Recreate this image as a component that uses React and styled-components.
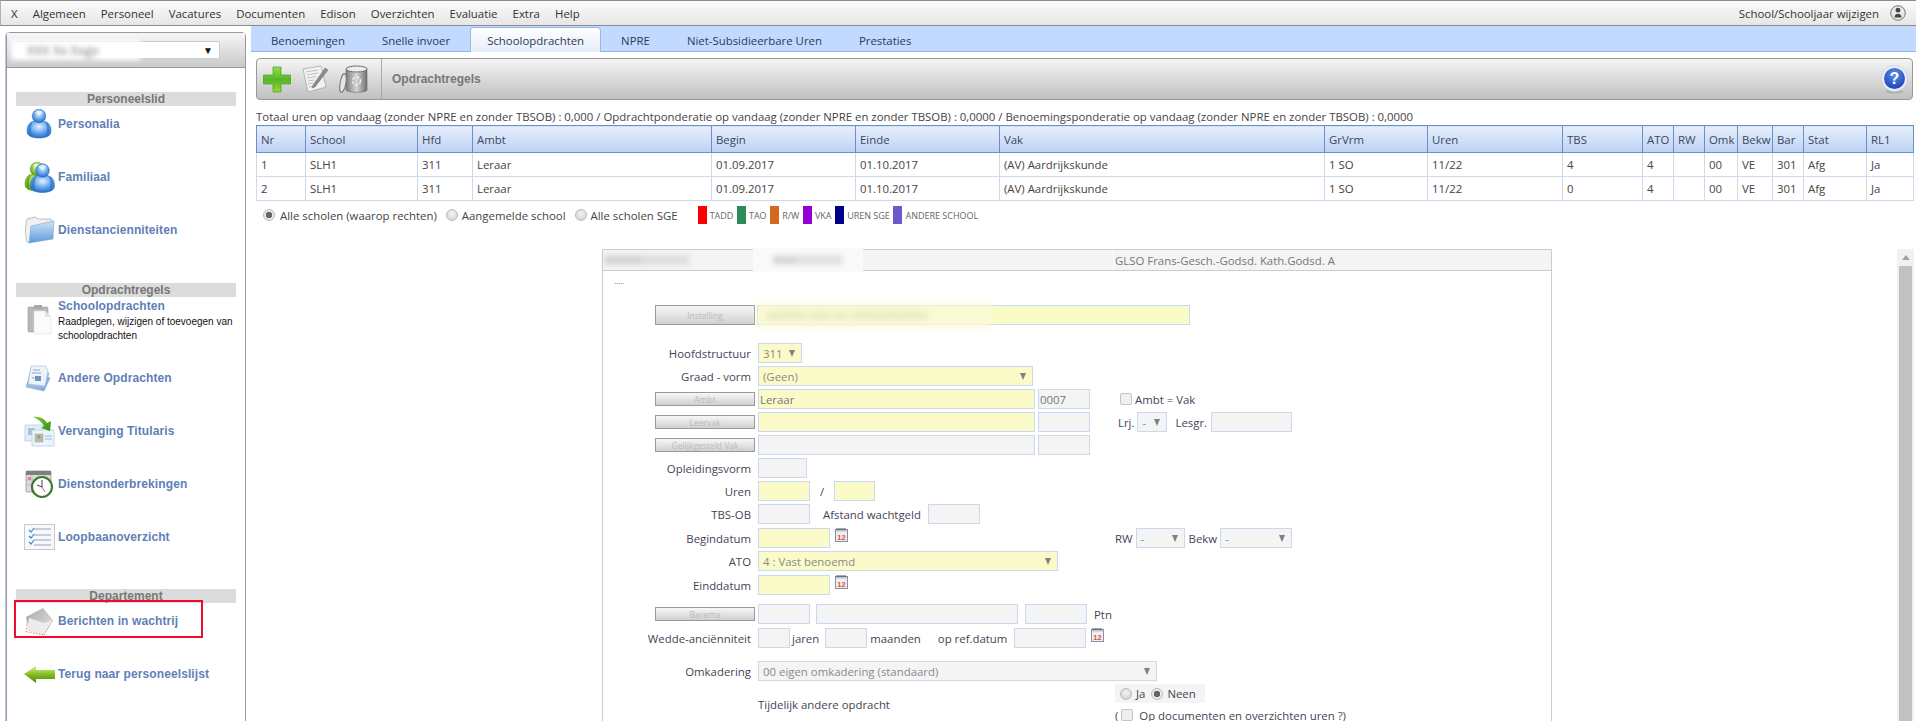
import React from "react";
import styled, { createGlobalStyle } from "styled-components";

const Global = createGlobalStyle`
  html, body { margin: 0; padding: 0; background: #fff; }
  body { font-family: "Open Sans", "Liberation Sans", sans-serif; font-size: 11.4px; color: #444; }
  * { box-sizing: border-box; }
`;

const Page = styled.div`
  width: 1916px;
  height: 721px;
  overflow: hidden;
  display: flex;
  flex-direction: column;
`;

const TopBar = styled.header`
  height: 26px;
  flex: none;
  display: flex;
  align-items: center;
  padding: 0 10px;
  border-top: 1px solid #8c8c8c;
  border-bottom: 1px solid #8c8c8c;
  border-left: 1px solid #b0b0b0;
  background: linear-gradient(#fbfbfb, #e6e6e6);
  color: #333;
`;
const MenuItem = styled.span`
  margin-right: 15.1px;
`;
const TopRight = styled.div`
  margin-left: auto;
  display: flex;
  align-items: center;
  gap: 11px;
`;

const Shell = styled.div`
  flex: 1;
  display: flex;
  min-height: 0;
`;

const Sidebar = styled.aside`
  width: 251px;
  flex: none;
  padding: 6px 5px 0 6px;
`;
const SidePanel = styled.div`
  height: 720px;
  border: 1px solid #999;
  border-radius: 4px 4px 0 0;
  box-shadow: -1px 0 0 #b7cbe8;
`;
const SideHead = styled.div`
  height: 35px;
  padding: 8px 25px 0 9px;
  background: linear-gradient(#f6f6f6, #c9c9c9);
  border-bottom: 1px solid #999;
`;
const SideSelect = styled.div`
  height: 18px;
  background: #fff;
  border: 1px solid #ccc;
  border-radius: 1px;
  display: flex;
  align-items: center;
  justify-content: space-between;
  padding-right: 6px;
  font-size: 10px;
  color: #111;
`;
const Blur = styled.span`
  display: inline-block;
  flex: none;
  width: ${(p) => p.$w}px;
  height: ${(p) => p.$h || 14}px;
  line-height: ${(p) => p.$h || 14}px;
  margin-left: ${(p) => p.$ml || 0}px;
  padding-left: ${(p) => p.$pl || 0}px;
  overflow: hidden;
  white-space: nowrap;
  color: ${(p) => p.$c || "#777"};
  font-size: ${(p) => p.$fs || 12}px;
  filter: blur(${(p) => p.$r || 2.5}px);
  background: ${(p) => p.$bg || "transparent"};
`;
const SideBody = styled.div`
  display: flex;
  flex-direction: column;
  padding: 24px 9px 0 9px;
  font-family: "Liberation Sans", Arial, sans-serif;
`;
const SectionTitle = styled.div`
  height: 14px;
  flex: none;
  line-height: 14px;
  margin-top: ${(p) => p.$top || 0}px;
  background: #dcdcdc;
  color: #777;
  font-size: 12px;
  font-weight: 700;
  text-align: center;
`;
const SideItem = styled.div`
  position: relative;
  min-height: 36px;
  flex: none;
  margin-bottom: 17px;
  padding-left: 7px;
  display: flex;
  align-items: ${(p) => (p.$top ? "flex-start" : "center")};
  gap: 3px;
`;
const SideIcon = styled.span`
  width: 32px;
  flex: none;
  display: flex;
  justify-content: center;
  margin-top: ${(p) => p.$top || 0}px;
`;
const SideText = styled.div`
  min-width: 0;
`;
const SideLink = styled.div`
  color: #5f7fb6;
  font-size: 12px;
  font-weight: 700;
  line-height: 18px;
  letter-spacing: 0.1px;
`;
const SideDesc = styled.div`
  color: #111;
  font-size: 10px;
  line-height: 14px;
  width: 180px;
`;
const Highlight = styled.span`
  position: absolute;
  left: -2px;
  top: -3px;
  width: 189px;
  height: 38px;
  border: 2px solid #ee0b2c;
`;

const Main = styled.main`
  flex: 1;
  min-width: 0;
  display: flex;
  flex-direction: column;
`;
const TabStrip = styled.nav`
  height: 26px;
  flex: none;
  display: flex;
  align-items: flex-end;
  gap: 3px;
  padding-left: 3px;
  background: #c2daff;
  border-bottom: 1px solid #94b4e0;
`;
const Tab = styled.div`
  height: 25px;
  padding: 0 16px;
  margin-bottom: -1px;
  display: flex;
  align-items: center;
  color: #2e3a55;
  border: 1px solid ${(p) => (p.$active ? "#9db8de" : "transparent")};
  border-bottom: 0;
  border-radius: 4px 4px 0 0;
  background: ${(p) => (p.$active ? "linear-gradient(#fff, #e4edfa)" : "transparent")};
`;
const Toolbar = styled.div`
  height: 42px;
  flex: none;
  margin: 6px 3px 0 5px;
  display: flex;
  align-items: center;
  border: 1px solid #999;
  border-radius: 4px;
  background: linear-gradient(#f5f5f5, #c0c0c0);
`;
const ToolIcons = styled.div`
  width: 125px;
  height: 100%;
  flex: none;
  display: flex;
  align-items: center;
  gap: 11px;
  padding-left: 6px;
  border-right: 1px solid #a8a8a8;
`;
const ToolTitle = styled.div`
  margin-left: 10px;
  font-family: "Liberation Sans", Arial, sans-serif;
  font-weight: 700;
  font-size: 12px;
  color: #777;
`;
const ToolEnd = styled.div`
  margin-left: auto;
  margin-right: 4px;
  display: flex;
`;
const Totals = styled.div`
  margin: 8px 0 0 5px;
  height: 17px;
  line-height: 17px;
  color: #444;
  white-space: nowrap;
`;
const Table = styled.table`
  width: 1657px;
  margin-left: 5px;
  flex: none;
  table-layout: fixed;
  border-collapse: collapse;
  border: 1px solid #6d8fc8;
  color: #444;
`;
const Th = styled.th`
  height: 27px;
  padding: 0 0 0 4px;
  text-align: left;
  font-weight: 400;
  color: #3c4660;
  background: linear-gradient(#e6eefb, #bcd3f3);
  border: 1px solid #6d8fc8;
  white-space: nowrap;
  overflow: hidden;
`;
const Td = styled.td`
  height: 24px;
  padding: 0 0 0 4px;
  border: 1px solid #cfd9ec;
  white-space: nowrap;
`;
const LegendRow = styled.div`
  height: 18px;
  margin: 5px 0 0 12px;
  display: flex;
  align-items: center;
  flex: none;
`;
const Radio = styled.input.attrs({ type: "radio", readOnly: true })`
  appearance: none;
  margin: 0 ${(p) => (p.$tight ? 4 : 5)}px 0 0;
  width: 12px;
  height: 12px;
  flex: none;
  border-radius: 50%;
  border: 1px solid #bbb;
  background: radial-gradient(circle at 50% 35%, #f2f2f2, #cfcfcf);
  &:checked {
    background: radial-gradient(circle, #666 0 3px, #e9e9e9 3.5px);
  }
`;
const RadioLabel = styled.span`
  flex: none;
  margin-right: ${(p) => p.$mr ?? 9}px;
  white-space: nowrap;
`;
const Legend = styled.div`
  display: flex;
  align-items: center;
  gap: 3px;
  margin-right: 3.6px;
  margin-left: ${(p) => p.$ml || 0}px;
  font-size: 9px;
  color: #666;
  white-space: nowrap;
`;
const Swatch = styled.span`
  width: 9px;
  height: 18px;
  background: ${(p) => p.$c};
`;

const Lower = styled.div`
  flex: 1;
  min-height: 0;
  margin-top: 25px;
  display: flex;
  padding: 0 2px 0 351px;
`;
const FormPanel = styled.section`
  width: 950px;
  flex: none;
  border: 1px solid #ccc;
  border-bottom: 0;
`;
const FormHead = styled.div`
  height: 21px;
  display: grid;
  grid-template-columns: 153px 357px 1fr;
  background: #f4f4f4;
  border-bottom: 1px solid #ccc;
  color: #777;
`;
const HeadCell = styled.div`
  height: 20px;
  display: flex;
  align-items: center;
  padding-left: ${(p) => p.$pl || 0}px;
  border-left: ${(p) => (p.$line ? "1px solid #fff" : "0")};
  white-space: nowrap;
`;
const HeadTab = styled.div`
  width: 110px;
  height: 24px;
  margin-left: -4px;
  background: #fafafa;
  display: flex;
  align-items: center;
  justify-content: center;
`;
const Dots = styled.div`
  margin: 3px 0 0 11px;
  height: 14px;
  font-size: 8px;
  line-height: 14px;
  color: #666;
`;
const FormBody = styled.div`
  display: flex;
  flex-direction: column;
  gap: 3px;
  margin-top: 17px;
`;
const Row = styled.div`
  display: grid;
  grid-template-columns: 155px 360px 1fr;
  height: ${(p) => p.$h || 20}px;
  margin-top: ${(p) => p.$top || 0}px;
`;
const Label = styled.label`
  display: flex;
  align-items: center;
  justify-content: flex-end;
  padding-right: 7px;
  color: #445;
  white-space: nowrap;
`;
const ButtonCell = styled.div`
  display: flex;
  justify-content: flex-end;
  align-items: center;
  padding-right: 3px;
`;
const FormButton = styled.button`
  width: 100px;
  height: ${(p) => p.$h || 14}px;
  padding: 0;
  border: 1px solid #9a9a9a;
  background: linear-gradient(#f7f7f7, #d0d0d0);
  color: #bbb;
  font: 8.5px "Open Sans", sans-serif;
`;
const Mid = styled.div`
  display: flex;
  align-items: center;
  white-space: nowrap;
  ${(p) => (p.$span ? "grid-column: 2 / 4;" : "")}
`;
const Right = styled.div`
  display: flex;
  align-items: center;
  margin-left: ${(p) => p.$ml ?? 0}px;
  white-space: nowrap;
`;
const Text = styled.span`
  color: #445;
  margin: 0 ${(p) => p.$mr ?? 0}px 0 ${(p) => p.$ml ?? 0}px;
  white-space: nowrap;
`;
const Field = styled.input.attrs({ readOnly: true })`
  width: ${(p) => p.$w}px;
  height: 20px;
  flex: none;
  margin-left: ${(p) => p.$ml ?? 0}px;
  padding: 0 0 0 1px;
  border: 1px solid #cbd9ef;
  outline: 0;
  background: ${(p) => (p.$y ? "#fbfbc9" : "#f4f4f4")};
  color: #777;
  font: 11.4px "Open Sans", sans-serif;
`;
const FieldBox = styled.div`
  width: ${(p) => p.$w}px;
  height: 20px;
  margin-left: -1px;
  border: 1px solid #cbd9ef;
  background: #fbfbc9;
  display: flex;
  align-items: center;
`;
const Select = styled.div`
  width: ${(p) => p.$w}px;
  height: 20px;
  flex: none;
  margin-left: ${(p) => p.$ml ?? 0}px;
  padding: 0 6px 0 4px;
  display: flex;
  align-items: center;
  justify-content: space-between;
  border: 1px solid #cbd9ef;
  background: ${(p) => (p.$y ? "#fbfbc9" : "#f4f4f4")};
  color: #8a8a8a;
`;
const Caret = styled.span`
  width: 0;
  height: 0;
  border-left: 3.5px solid transparent;
  border-right: 3.5px solid transparent;
  border-top: 7px solid #808080;
`;
const Check = styled.input.attrs({ type: "checkbox", readOnly: true })`
  appearance: none;
  width: 12px;
  height: 12px;
  margin: 0 3px 0 ${(p) => p.$ml ?? 0}px;
  flex: none;
  border: 1px solid #c4c4c4;
  border-radius: 2px;
  background: #efefef;
`;
const ChoiceBox = styled.div`
  width: 90px;
  height: 19px;
  display: flex;
  align-items: center;
  background: #f4f4f4;
  padding-left: 5px;
`;
const ChoiceStack = styled.div`
  display: flex;
  flex-direction: column;
`;
const CheckLine = styled.div`
  display: flex;
  align-items: center;
  margin-top: 3px;
  height: 18px;
  color: #445;
  white-space: nowrap;
`;
const CalWrap = styled.span`
  margin: -8px 0 0 5px;
  display: flex;
`;
const Scrollbar = styled.div`
  width: 17px;
  margin-left: 345px;
  flex: none;
  background: #f1f1f1;
  display: flex;
  flex-direction: column;
  align-items: center;
`;
const ScrollUp = styled.div`
  height: 17px;
  flex: none;
  display: flex;
  align-items: center;
  justify-content: center;
  &::before {
    content: "";
    border-left: 4px solid transparent;
    border-right: 4px solid transparent;
    border-bottom: 5px solid #a3a3a3;
  }
`;
const ScrollThumb = styled.div`
  width: 13px;
  flex: 1;
  background: #c1c1c1;
`;

/* ---------- icons ---------- */
const BluePerson = ({ id, x = 0, y = 0, c1 = "#e6f3ff", c2 = "#5da3ec", c3 = "#1d63ba" }) => (
  <g transform={`translate(${x} ${y})`}>
    <defs>
      <radialGradient id={id} cx="50%" cy="35%" r="70%">
        <stop offset="0" stopColor={c1} />
        <stop offset=".55" stopColor={c2} />
        <stop offset="1" stopColor={c3} />
      </radialGradient>
    </defs>
    <path d="M1 22C1 14 6 11.500 13 11.500S25 14 25 22c0 5-5 7-12 7S1 27 1 22z" fill={`url(#${id})`} stroke={c3} strokeWidth=".5" />
    <path d="M5 13.500c-2 3-3 7-1.500 11l2 1c-1-4-1-8 1-13zM21 13.500c2 3 3 7 1.500 11l-2 1c1-4 1-8-1-13z" fill={c3} opacity=".55" />
    <circle cx="13" cy="7" r="6.800" fill={`url(#${id})`} stroke={c3} strokeWidth=".5" />
    <ellipse cx="13" cy="3.400" rx="3.600" ry="1.900" fill="#fff" opacity=".6" />
  </g>
);
const PersonIcon = () => (
  <svg width="27" height="30" viewBox="0 0 27 30"><BluePerson id="bp1" /></svg>
);
const FamilyIcon = () => (
  <svg width="31" height="31" viewBox="0 0 31 31">
    <BluePerson id="gp1" x="0" y="0" c1="#e8f8c0" c2="#8fc93a" c3="#4f8a14" />
    <BluePerson id="bp2" x="5.500" y="1.500" />
  </svg>
);
const FolderIcon = () => (
  <svg width="31" height="30" viewBox="0 0 31 30">
    <defs>
      <linearGradient id="fo1" x1="0" y1="0" x2="0" y2="1">
        <stop offset="0" stopColor="#cfe4f8" />
        <stop offset="1" stopColor="#5c9ad8" />
      </linearGradient>
    </defs>
    <path d="M3 4l8-2 3 2 13 0 1 4L5 28l-2-1C1 20 1 10 3 4z" fill="#f1f1f1" stroke="#a6a6a6" strokeWidth=".7" />
    <path d="M7 11L30 6l-1 18L5 28z" fill="url(#fo1)" stroke="#7fa6cf" strokeWidth=".6" />
  </svg>
);
const ClipIcon = () => (
  <svg width="25" height="31" viewBox="0 0 25 31">
    <rect x="1" y="3" width="20" height="25" rx="1" fill="#b9b9b9" stroke="#9a9a9a" strokeWidth=".6" />
    <path d="M7 3V1h8v2l2 2H5z" fill="#a8a8a8" />
    <path d="M7 7h11l6 6v17H7z" fill="#fbfbfb" stroke="#dedede" strokeWidth=".6" />
    <path d="M18 7v6h6z" fill="#e3e3e3" />
  </svg>
);
const StackIcon = () => (
  <svg width="28" height="27" viewBox="0 0 28 27">
    <defs>
      <linearGradient id="st1" x1="0" y1="0" x2="1" y2="1">
        <stop offset="0" stopColor="#d6e4f5" />
        <stop offset="1" stopColor="#6f9fd3" />
      </linearGradient>
    </defs>
    <path d="M1 22L7 4l18 9-6 13z" fill="url(#st1)" stroke="#7ca2cf" strokeWidth=".5" />
    <path d="M2 21L6 3l18 5-4 15z" fill="#a9c5e6" stroke="#7ca2cf" strokeWidth=".5" />
    <path d="M3 19L6 1h15l2 5-3 15z" fill="#eef3fa" stroke="#93aed0" strokeWidth=".5" />
    <path d="M8 5h7M7 8h9" stroke="#8aa0d6" strokeWidth="1" />
    <rect x="10" y="11" width="6" height="5" fill="#6d93b8" />
    <rect x="7" y="12" width="2.500" height="2" fill="#b8c8de" />
  </svg>
);
const SwapIcon = () => (
  <svg width="31" height="31" viewBox="0 0 31 31">
    <defs>
      <linearGradient id="sw1" x1="0" y1="0" x2="1" y2="1">
        <stop offset="0" stopColor="#86d23a" />
        <stop offset="1" stopColor="#2d8a12" />
      </linearGradient>
    </defs>
    <rect x="1" y="9" width="18" height="16" fill="#e3eefa" stroke="#afc8e4" strokeWidth=".7" />
    <rect x="4" y="12" width="7" height="7" fill="#aec2d2" />
    <rect x="8" y="14" width="22" height="16" fill="#edf4fc" stroke="#afc8e4" strokeWidth=".7" />
    <rect x="11" y="18" width="8" height="8" fill="#b4bfa8" stroke="#9ab" strokeWidth=".5" />
    <circle cx="15" cy="21" r="1.700" fill="#c08a66" />
    <path d="M21 20h7M21 23h7" stroke="#9bb9d9" strokeWidth="1" />
    <path d="M9 1c6-1 11 1 14 6l4-2-1 10-9-3 3-2C18 6 14 3 9 1z" fill="url(#sw1)" />
  </svg>
);
const ClockIcon = () => (
  <svg width="28" height="28" viewBox="0 0 28 28">
    <rect x="1" y="1" width="25" height="21" rx="1" fill="#dcdcdc" stroke="#8b8b8b" strokeWidth=".7" />
    <rect x="1" y="1" width="25" height="4" fill="#7f7f7f" />
    <path d="M1 10h25M1 15h25M7 5v17M13 5v17M19 5v17" stroke="#b0b0b0" strokeWidth=".7" />
    <rect x="3" y="7" width="3" height="3" fill="#d88" />
    <circle cx="17" cy="17" r="10" fill="#fff" stroke="#3d7a33" strokeWidth="2.200" />
    <path d="M17 17V10M17 17l-5-2" stroke="#444" strokeWidth="1" />
    <path d="M17 17l3 5" stroke="#c33" strokeWidth=".8" />
  </svg>
);
const ListIcon = () => (
  <svg width="31" height="26" viewBox="0 0 31 26">
    <rect x=".500" y=".500" width="30" height="25" fill="#f6f8fb" stroke="#c9c9c9" />
    <path d="M10 5h17M10 11h17M10 16h17M10 21h17" stroke="#9ba3b5" strokeWidth="1" />
    <path d="M5 6l2 2 3-4M5 12l2 2 3-4M5 18l2 2 3-4" stroke="#3c8fd6" strokeWidth="1.200" fill="none" />
  </svg>
);
const MailIcon = () => (
  <svg width="29" height="29" viewBox="0 0 29 29">
    <defs>
      <linearGradient id="ma1" x1="0" y1="0" x2="1" y2="1">
        <stop offset="0" stopColor="#a9a9a9" />
        <stop offset="1" stopColor="#e6e6e6" />
      </linearGradient>
    </defs>
    <path d="M1 10L18 1l10 12-9 15-15-4z" fill="url(#ma1)" />
    <path d="M4 11l15 5 9-3-9 15-17-5z" fill="#ececec" />
    <path d="M1 25L3 9M2 25l17 3M19 28l9-15" stroke="#d76a6a" strokeWidth=".8" strokeDasharray="1.500 1.500" fill="none" />
  </svg>
);
const BackIcon = () => (
  <svg width="31" height="18" viewBox="0 0 31 18">
    <defs>
      <linearGradient id="ba1" x1="0" y1="0" x2="0" y2="1">
        <stop offset="0" stopColor="#dcee9a" />
        <stop offset=".5" stopColor="#86bc1e" />
        <stop offset="1" stopColor="#4b8a0c" />
      </linearGradient>
    </defs>
    <path d="M0 9L12 1v4h19v9H12v4z" fill="url(#ba1)" />
  </svg>
);
const PlusIcon = () => (
  <svg width="28" height="27" viewBox="0 0 28 27">
    <defs>
      <linearGradient id="pl1" x1="0" y1="0" x2="0" y2="1">
        <stop offset="0" stopColor="#8fe24a" />
        <stop offset=".5" stopColor="#55b52a" />
        <stop offset="1" stopColor="#8fda2d" />
      </linearGradient>
    </defs>
    <path d="M10 1h8v8h9a1 1 0 0 1 1 1v7a1 1 0 0 1-1 1h-9v8h-8v-8H1a1 1 0 0 1-1-1v-7a1 1 0 0 1 1-1h9z" fill="url(#pl1)" stroke="#4f9a28" strokeWidth=".7" />
  </svg>
);
const NoteIcon = () => (
  <svg width="26" height="28" viewBox="0 0 26 28">
    <path d="M1 4l18-3 5 21-18 5z" fill="#f2f2f2" stroke="#a0a0a0" strokeWidth=".7" />
    <path d="M4 7l12-2M5 10l11-2M5 13l9-1.500M6 16l6-1M6 19l5-1M7 22l6-1" stroke="#b2b2b2" strokeWidth=".8" />
    <path d="M11 20L23 3l3 2-13 17-3 1z" fill="#8a8a8a" stroke="#666" strokeWidth=".4" />
  </svg>
);
const TrashIcon = () => (
  <svg width="30" height="29" viewBox="0 0 30 29">
    <defs>
      <linearGradient id="tr1" x1="0" y1="0" x2="1" y2="0">
        <stop offset="0" stopColor="#7d7d7d" />
        <stop offset=".5" stopColor="#d6d6d6" />
        <stop offset="1" stopColor="#6f6f6f" />
      </linearGradient>
    </defs>
    <path d="M7 4h21v21c0 3-21 3-21 0z" fill="url(#tr1)" stroke="#666" strokeWidth=".6" />
    <ellipse cx="17.500" cy="4" rx="10.500" ry="3" fill="#ededed" stroke="#6f6f6f" />
    <ellipse cx="4" cy="18" rx="2.800" ry="9.500" transform="rotate(10 4 18)" fill="#e6e6e6" stroke="#777" strokeWidth="1" />
    <circle cx="17.500" cy="16" r="4" fill="none" stroke="#f2f2f2" strokeWidth="1.400" strokeDasharray="3 1.500" />
  </svg>
);
const HelpIcon = () => (
  <svg width="27" height="29" viewBox="0 0 27 29">
    <defs>
      <radialGradient id="he1" cx="50%" cy="30%" r="75%">
        <stop offset="0" stopColor="#5d8fe8" />
        <stop offset="1" stopColor="#1b3fae" />
      </radialGradient>
    </defs>
    <ellipse cx="13.500" cy="26.500" rx="9" ry="2" fill="#999" opacity=".5" />
    <circle cx="13.500" cy="13.500" r="13" fill="#eaf0fa" stroke="#b8c6de" strokeWidth=".6" />
    <circle cx="13.500" cy="13.500" r="10.500" fill="url(#he1)" />
    <text x="13.500" y="19" textAnchor="middle" fontFamily="Liberation Sans, sans-serif" fontWeight="700" fontSize="16" fill="#fff">?</text>
  </svg>
);
const CalendarIcon = () => (
  <svg width="14" height="15" viewBox="0 0 14 15">
    <rect x=".500" y="2.500" width="12" height="12" fill="#efeef5" stroke="#8d8da6" />
    <path d="M2 1v3M4 1v3M6 1v3M8 1v3M10 1v3" stroke="#555" strokeWidth="1" />
    <rect x="1" y="3" width="11" height="2" fill="#cfcfd8" opacity=".7" />
    <text x="6.500" y="12.500" textAnchor="middle" fontFamily="Liberation Sans, sans-serif" fontWeight="700" fontSize="7.500" fill="#e0501a">12</text>
  </svg>
);
const UserBadge = () => (
  <svg width="16" height="16" viewBox="0 0 16 16">
    <circle cx="8" cy="8" r="7.300" fill="#e8e8e8" stroke="#777" />
    <circle cx="8" cy="5.200" r="2.400" fill="#444" />
    <path d="M4.500 12.500c0-5 7-5 7 0z" fill="#444" />
  </svg>
);

/* ---------- data ---------- */
const menu = ["X", "Algemeen", "Personeel", "Vacatures", "Documenten", "Edison", "Overzichten", "Evaluatie", "Extra", "Help"];
const tabs = ["Benoemingen", "Snelle invoer", "Schoolopdrachten", "NPRE", "Niet-Subsidieerbare Uren", "Prestaties"];
const cols = [
  ["Nr", 49], ["School", 112], ["Hfd", 55], ["Ambt", 239], ["Begin", 144], ["Einde", 144], ["Vak", 325],
  ["GrVrm", 103], ["Uren", 135], ["TBS", 80], ["ATO", 31], ["RW", 31], ["Omk", 33], ["Bekw", 35],
  ["Bar", 31], ["Stat", 63], ["RL1", 47],
];
const rows = [
  ["1", "SLH1", "311", "Leraar", "01.09.2017", "01.10.2017", "(AV) Aardrijkskunde", "1 SO", "11/22", "4", "4", "", "00", "VE", "301", "Afg", "Ja"],
  ["2", "SLH1", "311", "Leraar", "01.09.2017", "01.10.2017", "(AV) Aardrijkskunde", "1 SO", "11/22", "0", "4", "", "00", "VE", "301", "Afg", "Ja"],
];
const legend = [
  ["#ff0000", "TADD"], ["#2e8b57", "TAO"], ["#d2691e", "R/W"], ["#9400d3", "VKA"], ["#00008b", "UREN SGE"], ["#6a5acd", "ANDERE SCHOOL"],
];

const Item = ({ icon, label, children }) => (
  <SideItem>
    <SideIcon>{icon}</SideIcon>
    <SideLink>{label}</SideLink>
    {children}
  </SideItem>
);

export default function App() {
  return (
    <Page>
      <Global />
      <TopBar>
        {menu.map((m) => <MenuItem key={m}>{m}</MenuItem>)}
        <TopRight>
          <span>School/Schooljaar wijzigen</span>
          <UserBadge />
        </TopRight>
      </TopBar>
      <Shell>
        <Sidebar>
          <SidePanel>
            <SideHead>
              <SideSelect>
                <Blur $w={130} $h={20} $ml={-6} $pl={16} $bg="#fff" $c="#777" $fs={13}>XXX Xx Xxgx</Blur>
                <span>▼</span>
              </SideSelect>
            </SideHead>
            <SideBody>
              <SectionTitle>Personeelslid</SectionTitle>
              <Item icon={<PersonIcon />} label="Personalia" />
              <Item icon={<FamilyIcon />} label="Familiaal" />
              <Item icon={<FolderIcon />} label="Dienstancienniteiten" />
              <SectionTitle $top={18}>Opdrachtregels</SectionTitle>
              <SideItem $top>
                <SideIcon $top={7}><ClipIcon /></SideIcon>
                <SideText>
                  <SideLink>Schoolopdrachten</SideLink>
                  <SideDesc>Raadplegen, wijzigen of toevoegen van schoolopdrachten</SideDesc>
                </SideText>
              </SideItem>
              <Item icon={<StackIcon />} label="Andere Opdrachten" />
              <Item icon={<SwapIcon />} label="Vervanging Titularis" />
              <Item icon={<ClockIcon />} label="Dienstonderbrekingen" />
              <Item icon={<ListIcon />} label="Loopbaanoverzicht" />
              <SectionTitle $top={17}>Departement</SectionTitle>
              <Item icon={<MailIcon />} label="Berichten in wachtrij"><Highlight /></Item>
              <Item icon={<BackIcon />} label="Terug naar personeelslijst" />
            </SideBody>
          </SidePanel>
        </Sidebar>
        <Main>
          <TabStrip>
            {tabs.map((t) => <Tab key={t} $active={t === "Schoolopdrachten"}>{t}</Tab>)}
          </TabStrip>
          <Toolbar>
            <ToolIcons>
              <PlusIcon />
              <NoteIcon />
              <TrashIcon />
            </ToolIcons>
            <ToolTitle>Opdrachtregels</ToolTitle>
            <ToolEnd><HelpIcon /></ToolEnd>
          </Toolbar>
          <Totals>Totaal uren op vandaag (zonder NPRE en zonder TBSOB) : 0,000 / Opdrachtponderatie op vandaag (zonder NPRE en zonder TBSOB) : 0,0000 / Benoemingsponderatie op vandaag (zonder NPRE en zonder TBSOB) : 0,0000</Totals>
          <Table>
            <colgroup>
              {cols.map(([c, w]) => <col key={c} style={{ width: w }} />)}
            </colgroup>
            <thead>
              <tr>{cols.map(([c]) => <Th key={c}>{c}</Th>)}</tr>
            </thead>
            <tbody>
              {rows.map((r) => (
                <tr key={r[0]}>{r.map((v, i) => <Td key={i}>{v}</Td>)}</tr>
              ))}
            </tbody>
          </Table>
          <LegendRow>
            <Radio defaultChecked name="scope" />
            <RadioLabel>Alle scholen (waarop rechten)</RadioLabel>
            <Radio name="scope" $tight />
            <RadioLabel>Aangemelde school</RadioLabel>
            <Radio name="scope" $tight />
            <RadioLabel $mr={0}>Alle scholen SGE</RadioLabel>
            {legend.map(([c, t], i) => (
              <Legend key={t} $ml={i === 0 ? 20 : 0}><Swatch $c={c} />{t}</Legend>
            ))}
          </LegendRow>
          <Lower>
            <FormPanel>
              <FormHead>
                <HeadCell $pl={2}><Blur $w={84} $h={10} $bg="#dedede" $c="#bbb" $fs={9}>XXXXXXX</Blur></HeadCell>
                <HeadCell $line><HeadTab><Blur $w={70} $h={10} $bg="#e2e2e2" $c="#bbb" $fs={9}>Xxxxx</Blur></HeadTab></HeadCell>
                <HeadCell $line $pl={1}>GLSO Frans-Gesch.-Godsd. Kath.Godsd. A</HeadCell>
              </FormHead>
              <Dots>.....</Dots>
              <FormBody>
                <Row>
                  <ButtonCell><FormButton $h={20}>Instelling</FormButton></ButtonCell>
                  <Mid $span>
                    <FieldBox $w={433}><Blur $w={233} $h={23} $pl={8} $bg="#fafad4" $c="#c9c99e" $fs={12} $r={3}>XXXXXX XXX XX XXXXXXXXXXX</Blur></FieldBox>
                  </Mid>
                </Row>
                <Row $top={15}>
                  <Label>Hoofdstructuur</Label>
                  <Mid><Select $w={44} $y>311<Caret /></Select></Mid>
                </Row>
                <Row>
                  <Label>Graad - vorm</Label>
                  <Mid><Select $w={275} $y>(Geen)<Caret /></Select></Mid>
                </Row>
                <Row>
                  <ButtonCell><FormButton>Ambt</FormButton></ButtonCell>
                  <Mid>
                    <Field $w={277} $y defaultValue="Leraar" />
                    <Field $w={52} $ml={3} defaultValue="0007" />
                  </Mid>
                  <Right>
                    <Check $ml={2} />
                    <Text>Ambt = Vak</Text>
                  </Right>
                </Row>
                <Row>
                  <ButtonCell><FormButton>Leervak</FormButton></ButtonCell>
                  <Mid>
                    <Field $w={277} $y />
                    <Field $w={52} $ml={3} />
                  </Mid>
                  <Right>
                    <Text $mr={3}>Lrj.</Text>
                    <Select $w={30}>-<Caret /></Select>
                    <Text $ml={8}>Lesgr.</Text>
                    <Field $w={81} $ml={4} />
                  </Right>
                </Row>
                <Row>
                  <ButtonCell><FormButton>Gelijkgesteld Vak</FormButton></ButtonCell>
                  <Mid>
                    <Field $w={277} />
                    <Field $w={52} $ml={3} />
                  </Mid>
                </Row>
                <Row>
                  <Label>Opleidingsvorm</Label>
                  <Mid><Field $w={49} /></Mid>
                </Row>
                <Row>
                  <Label>Uren</Label>
                  <Mid>
                    <Field $w={52} $y />
                    <Text $ml={10} $mr={10}>/</Text>
                    <Field $w={41} $y />
                  </Mid>
                </Row>
                <Row>
                  <Label>TBS-OB</Label>
                  <Mid>
                    <Field $w={52} />
                    <Text $ml={13} $mr={7}>Afstand wachtgeld</Text>
                    <Field $w={52} />
                  </Mid>
                </Row>
                <Row $top={1}>
                  <Label>Begindatum</Label>
                  <Mid>
                    <Field $w={72} $y />
                    <CalWrap><CalendarIcon /></CalWrap>
                  </Mid>
                  <Right $ml={-3}>
                    <Text $mr={3}>RW</Text>
                    <Select $w={49}>-<Caret /></Select>
                    <Text $ml={4} $mr={3}>Bekw</Text>
                    <Select $w={72}>-<Caret /></Select>
                  </Right>
                </Row>
                <Row>
                  <Label>ATO</Label>
                  <Mid><Select $w={300} $y>4 : Vast benoemd<Caret /></Select></Mid>
                </Row>
                <Row $top={1}>
                  <Label>Einddatum</Label>
                  <Mid>
                    <Field $w={72} $y />
                    <CalWrap><CalendarIcon /></CalWrap>
                  </Mid>
                </Row>
                <Row $top={6}>
                  <ButtonCell><FormButton>Barema</FormButton></ButtonCell>
                  <Mid $span>
                    <Field $w={52} />
                    <Field $w={202} $ml={6} />
                    <Field $w={62} $ml={7} />
                    <Text $ml={7}>Ptn</Text>
                  </Mid>
                </Row>
                <Row $top={1}>
                  <Label>Wedde-anciënniteit</Label>
                  <Mid $span>
                    <Field $w={32} />
                    <Text $ml={2} $mr={6}>jaren</Text>
                    <Field $w={42} />
                    <Text $ml={3} $mr={17}>maanden</Text>
                    <Text $mr={7}>op ref.datum</Text>
                    <Field $w={72} />
                    <CalWrap><CalendarIcon /></CalWrap>
                  </Mid>
                </Row>
                <Row $top={10}>
                  <Label>Omkadering</Label>
                  <Mid $span><Select $w={399}>00 eigen omkadering (standaard)<Caret /></Select></Mid>
                </Row>
                <Row $h={40}>
                  <span />
                  <Mid><Text>Tijdelijk andere opdracht</Text></Mid>
                  <Right $ml={-3}>
                    <ChoiceStack>
                      <ChoiceBox>
                        <Radio name="tmp" $tight />
                        <Text $mr={6}>Ja</Text>
                        <Radio name="tmp" defaultChecked $tight />
                        <Text>Neen</Text>
                      </ChoiceBox>
                      <CheckLine>( <Check $ml={3} />&nbsp;Op documenten en overzichten uren ?)</CheckLine>
                    </ChoiceStack>
                  </Right>
                </Row>
              </FormBody>
            </FormPanel>
            <Scrollbar>
              <ScrollUp />
              <ScrollThumb />
            </Scrollbar>
          </Lower>
        </Main>
      </Shell>
    </Page>
  );
}
